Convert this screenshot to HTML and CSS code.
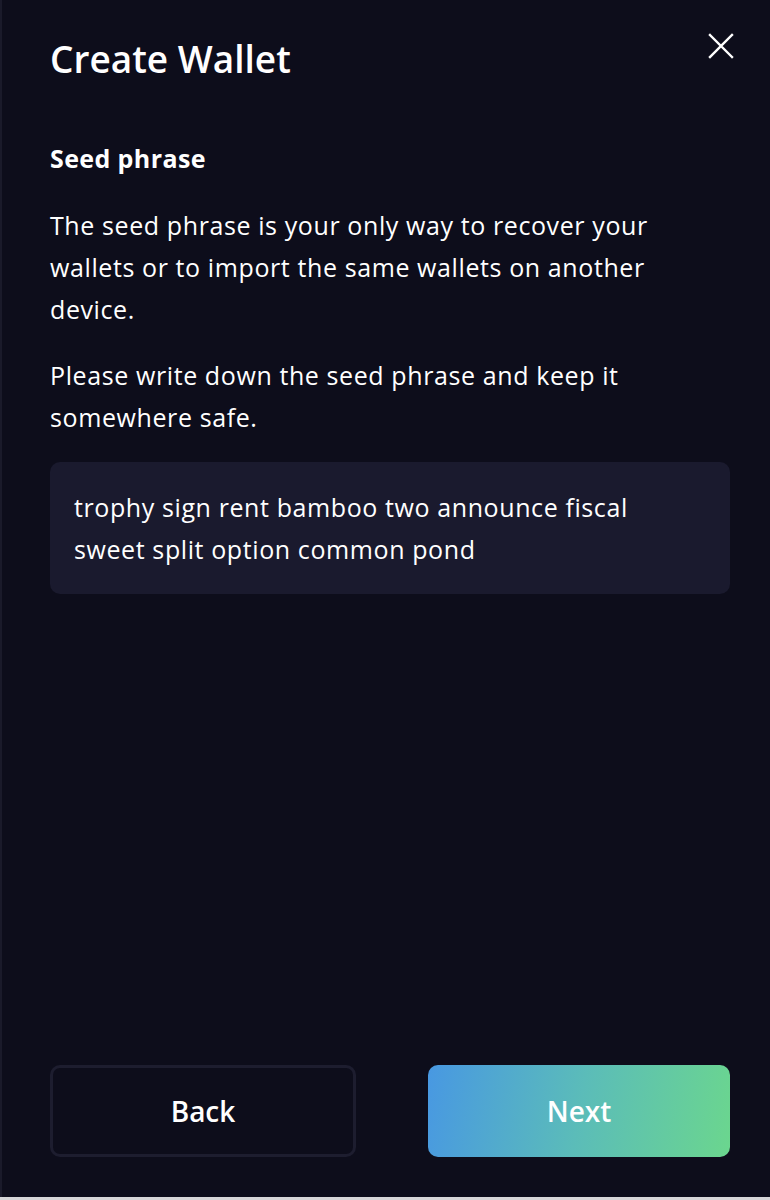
FILE: index.html
```html
<!DOCTYPE html>
<html>
<head>
<meta charset="utf-8">
<link rel="stylesheet" href="styles.css">
</head>
<body>
<div class="modal">
  <header class="head">
    <h1 class="title">Create Wallet</h1>
    <button class="close" aria-label="Close">
      <svg width="26" height="26" viewBox="0 0 26 26"><path d="M2 2L24 24M24 2L2 24" stroke="#fff" stroke-width="2.4" stroke-linecap="square" fill="none"/></svg>
    </button>
  </header>
  <section class="content">
    <h2 class="sub">Seed phrase</h2>
    <p class="para">The seed phrase is your only way to recover your wallets or to import the same wallets on another device.</p>
    <p class="para">Please write down the seed phrase and keep it somewhere safe.</p>
    <div class="seed">trophy sign rent bamboo two announce fiscal sweet split option common pond</div>
  </section>
  <footer class="actions">
    <button class="btn back">Back</button>
    <button class="btn next">Next</button>
  </footer>
</div>
<div class="strip"></div>
</body>
</html>
```
FILE: styles.css
```css
html, body { margin: 0; padding: 0; }
body {
  background: #0d0d1b;
  font-family: "Open Sans", Lato, sans-serif;
  color: #fff;
  width: 770px;
  height: 1200px;
  overflow: hidden;
}
.modal {
  box-sizing: border-box;
  height: 1197px;
  border-left: 2px solid #1a1a2a;
  padding: 0 40px 40px 48px;
  display: flex;
  flex-direction: column;
}
.head {
  display: flex;
  justify-content: space-between;
  align-items: flex-start;
  padding-top: 34px;
}
.title {
  margin: 0;
  font-size: 37px;
  font-weight: 600;
  line-height: 50px;
}
.close {
  background: none;
  border: 0;
  padding: 0;
  margin-top: -1px;
  margin-right: -4px;
  cursor: pointer;
}
.content { flex: 1; padding-top: 58px; }
.sub {
  margin: 0 0 30px;
  font-size: 25px;
  font-weight: 700;
  line-height: 32px;
  letter-spacing: 0.4px;
}
.para {
  margin: 0 0 24px;
  font-size: 25px;
  line-height: 42px;
  font-weight: 400;
  letter-spacing: 0.6px;
  padding-right: 20px;
}
.seed {
  background: #1a1a2e;
  border-radius: 10px;
  padding: 24px 40px 24px 24px;
  font-size: 25px;
  line-height: 42px;
  letter-spacing: 0.6px;
  margin-top: 22px;
}
.actions {
  display: flex;
  justify-content: space-between;
}
.btn {
  box-sizing: border-box;
  height: 92px;
  border-radius: 10px;
  font-family: "Open Sans", Lato, sans-serif;
  font-size: 28px;
  font-weight: 600;
  color: #fff;
  cursor: pointer;
}
.back {
  width: 306px;
  background: transparent;
  border: 3px solid #1d1d2f;
}
.next {
  width: 302px;
  border: 0;
  background: linear-gradient(100deg, #4898e2 0%, #5bbcb9 50%, #6bd68e 100%);
}
.strip { height: 3px; background: #d6d6d8; }
```
